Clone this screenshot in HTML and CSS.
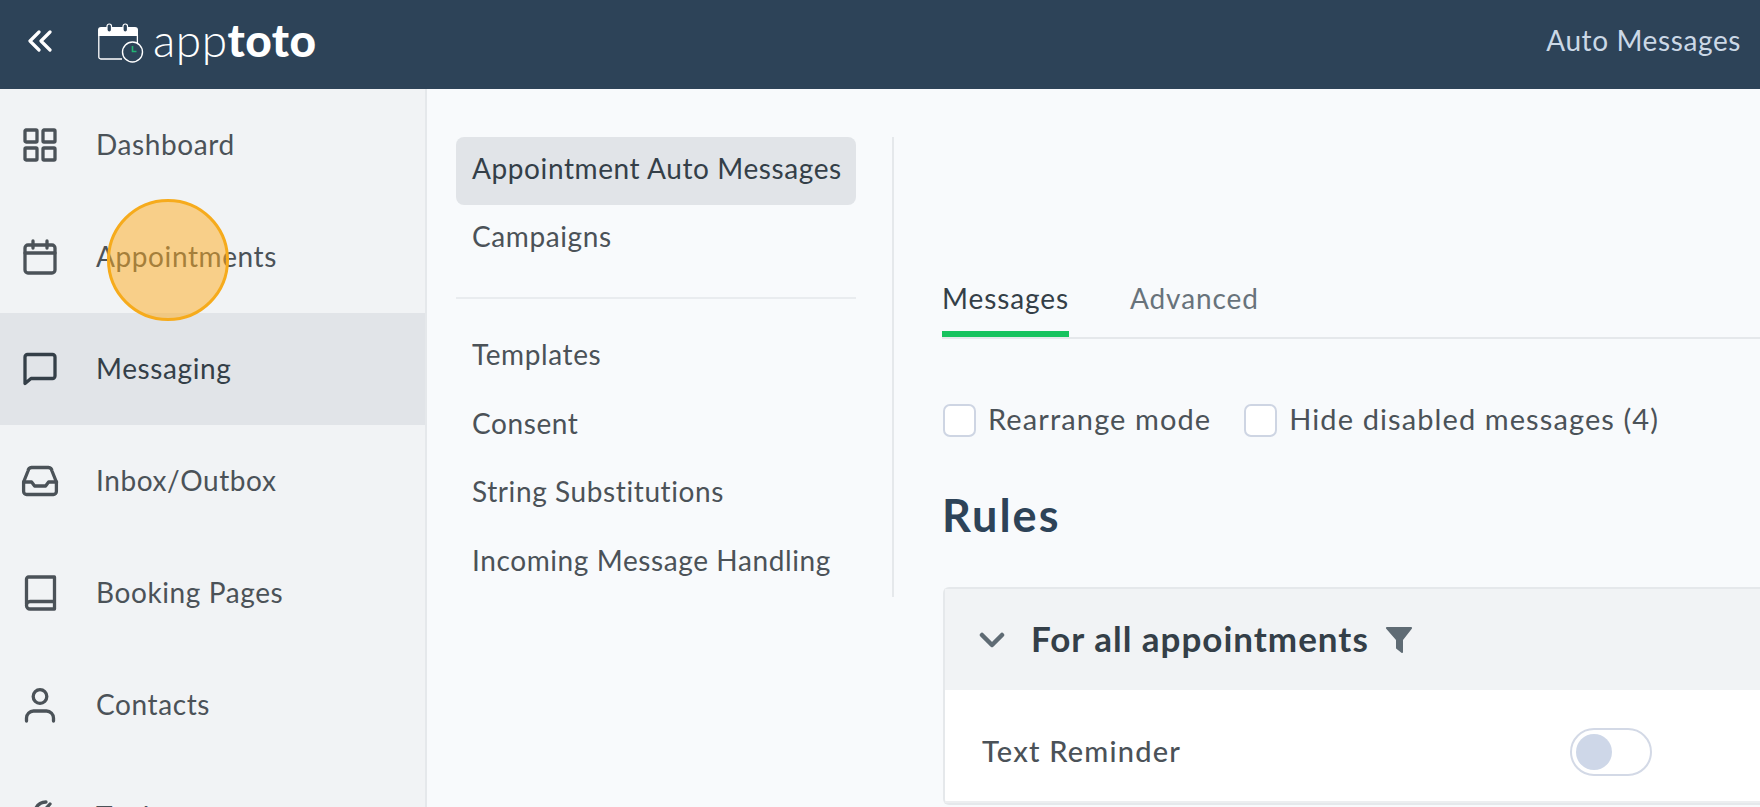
FILE: index.html
```html
<!DOCTYPE html>
<html lang="en">
<head>
    <meta charset="UTF-8">
    <meta name="viewport" content="width=device-width, initial-scale=1.0">
    <title>Apptoto - Auto Messages</title>
    <link rel="stylesheet" href="styles.css">
</head>
<body>
    <header class="topbar">
        <svg class="collapse" viewBox="0 0 24 22" fill="none" stroke="currentColor" stroke-width="3.2" stroke-linecap="round" stroke-linejoin="round">
            <path d="M11 2 2 11l9 9"/>
            <path d="M22 2l-9 9 9 9"/>
        </svg>
        <div class="logo">
            <svg class="logo-icon" viewBox="0 0 46 40">
                <path d="M3 4h34a3 3 0 0 1 3 3v6H0V7a3 3 0 0 1 3-3z" fill="#fff"/>
                <rect x="9" y="1" width="4.500" height="8" rx="2.200" fill="#2d4358" stroke="#fff" stroke-width="1.200"/>
                <rect x="25" y="1" width="4.500" height="8" rx="2.200" fill="#2d4358" stroke="#fff" stroke-width="1.200"/>
                <path d="M.8 12v22a2 2 0 0 0 2 2h21.200M39.400 12v8" fill="none" stroke="#fff" stroke-width="1.300"/>
                <circle cx="34.500" cy="29" r="10" fill="#2d4358" stroke="#fff" stroke-width="1.400"/>
                <path d="M34.500 23v5.500h4" fill="none" stroke="#22b573" stroke-width="1.600"/>
            </svg>
            <span class="logo-text">app<b>toto</b></span>
        </div>
        <span class="page-name">Auto Messages</span>
    </header>

    <div class="layout">
        <nav class="sidebar">
            <a class="side-item">
                <svg class="side-icon" viewBox="0 0 34 34"><rect x="2" y="2" width="12" height="12" rx="1"/><rect x="20" y="2" width="12" height="12" rx="1"/><rect x="2" y="20" width="12" height="12" rx="1"/><rect x="20" y="20" width="12" height="12" rx="1"/></svg>
                <span class="side-label">Dashboard</span>
            </a>
            <a class="side-item">
                <svg class="side-icon" viewBox="0 0 34 34"><rect x="2" y="5" width="30" height="28" rx="3"/><path d="M2 13h30M10 1v7M24 1v7"/></svg>
                <span class="side-label">Appointments</span>
            </a>
            <a class="side-item active">
                <svg class="side-icon" viewBox="0 0 34 34"><path d="M2 31.500V5a2.500 2.500 0 0 1 2.500-2.500h25A2.500 2.500 0 0 1 32 5v19a2.500 2.500 0 0 1-2.500 2.500H8z"/></svg>
                <span class="side-label">Messaging</span>
            </a>
            <a class="side-item">
                <svg class="side-icon" viewBox="0 0 34 34"><path d="M.6 18 5 7a4 4 0 0 1 3.600-3.500h16.800A4 4 0 0 1 29 7l4.400 11v9.500a3 3 0 0 1-3 3H3.600a3 3 0 0 1-3-3z"/><path d="M.6 18h8l3 4h11l3-4h8"/></svg>
                <span class="side-label">Inbox/Outbox</span>
            </a>
            <a class="side-item">
                <svg class="side-icon" viewBox="0 0 34 34"><path d="M3.500 28V3a2 2 0 0 1 2-2h26v32H7a3.500 3.500 0 0 1-3.500-3.500V29A3.500 3.500 0 0 1 7 25.500h24.500"/></svg>
                <span class="side-label">Booking Pages</span>
            </a>
            <a class="side-item">
                <svg class="side-icon" viewBox="0 0 34 34"><circle cx="17" cy="8.500" r="6.800"/><path d="M3.500 33v-3a7 7 0 0 1 7-7h13a7 7 0 0 1 7 7v3"/></svg>
                <span class="side-label">Contacts</span>
            </a>
            <a class="side-item">
                <svg class="side-icon" viewBox="0 0 34 34"><path d="M12 10c2-5 6-8 11-8M27 4l-9 10M3 32l9-12"/></svg>
                <span class="side-label">Tools</span>
            </a>
        </nav>

        <aside class="submenu">
            <div class="sub-group sub-group-top">
                <a class="sub-item active">Appointment Auto Messages</a>
                <a class="sub-item">Campaigns</a>
            </div>
            <div class="sub-group">
                <a class="sub-item">Templates</a>
                <a class="sub-item">Consent</a>
                <a class="sub-item">String Substitutions</a>
                <a class="sub-item">Incoming Message Handling</a>
            </div>
        </aside>

        <main class="content">
            <div class="tabs">
                <a class="tab active">Messages</a>
                <a class="tab">Advanced</a>
            </div>
            <div class="options">
                <label class="check"><span class="box"></span>Rearrange mode</label>
                <label class="check"><span class="box"></span>Hide disabled messages (4)</label>
            </div>
            <h1 class="title">Rules</h1>
            <section class="card">
                <div class="card-head">
                    <svg class="chevron" viewBox="0 0 26 16" fill="none" stroke="currentColor" stroke-width="4.500" stroke-linecap="round" stroke-linejoin="round"><path d="M3 3l10 10L23 3"/></svg>
                    <h2>For all appointments</h2>
                    <svg class="funnel" viewBox="0 0 28 28"><path d="M2 1h24a1 1 0 0 1 .8 1.700L18 14v12a1 1 0 0 1-1.600.8l-5-4a1 1 0 0 1-.4-.8v-8L1.200 2.700A1 1 0 0 1 2 1z"/></svg>
                </div>
                <div class="card-row">
                    <span class="row-name">Text Reminder</span>
                    <span class="toggle"><span class="knob"></span></span>
                </div>
            </section>
        </main>
    </div>

    <div class="click-marker"></div>
</body>
</html>
```

FILE: styles.css
```css
* {
    box-sizing: border-box;
}

html, body {
    height: 100%;
}

body {
    margin: 0;
    font-family: 'Lato', 'Noto Sans', sans-serif;
    font-size: 28px;
    letter-spacing: 0.6px;
    color: #4b5258;
    background-color: #f8fafc;
    overflow: hidden;
}

.topbar {
    display: flex;
    align-items: center;
    height: 89px;
    padding: 0 19px 7px 28px;
    background-color: #2d4358;
    color: #fff;
}

.collapse {
    flex: none;
    width: 24px;
    height: 22px;
    margin-right: 46px;
}

.logo {
    display: flex;
    align-items: center;
    gap: 9px;
}

.logo-icon {
    width: 46px;
    height: 40px;
    margin-top: 3px;
}

.logo-text {
    font-size: 46px;
    font-weight: 300;
    line-height: 1;
    letter-spacing: 0.5px;
    margin-top: -2px;
}

.logo-text b {
    font-weight: 900;
}

.page-name {
    margin-left: auto;
    color: #cbd8e6;
    padding-bottom: 2px;
}

.layout {
    display: flex;
    height: 718px;
}

.sidebar {
    flex: none;
    width: 427px;
    overflow: hidden;
    background-color: #f1f3f5;
    border-right: 2px solid #e5e8eb;
}

.side-item {
    display: flex;
    align-items: center;
    gap: 39px;
    height: 112px;
    padding-left: 23px;
}

.side-item.active {
    background-color: #e1e4e8;
    color: #343f48;
}

.side-label {
    margin-bottom: 3px;
}

.side-icon {
    flex: none;
    width: 34px;
    height: 34px;
    overflow: visible;
    fill: none;
    stroke: currentColor;
    stroke-width: 3.3;
    stroke-linecap: round;
    stroke-linejoin: round;
}

.submenu {
    flex: none;
    width: 467px;
    height: 460px;
    margin-top: 48px;
    padding: 0 36px 0 29px;
    border-right: 2px solid #e5e8eb;
}

.sub-group-top {
    padding-bottom: 24px;
    border-bottom: 2px solid #e9ecef;
    margin-bottom: 24px;
}

.sub-item {
    display: flex;
    align-items: center;
    height: 68px;
    padding: 0 0 6px 16px;
    border-radius: 8px;
}

.sub-group:last-child .sub-item {
    height: 68.5px;
}

.sub-item.active {
    background-color: #e1e4e8;
    color: #343f48;
}

.content {
    flex: 1;
    min-width: 0;
    padding-left: 48px;
}

.tabs {
    display: flex;
    gap: 61px;
    height: 250px;
    padding-top: 184px;
    border-bottom: 2px solid #e5e8eb;
    color: #68737b;
    letter-spacing: 0.9px;
}

.tab {
    height: 64px;
    line-height: 50px;
}

.tab.active {
    color: #343f48;
    border-bottom: 6px solid #17c35f;
}

.options {
    display: flex;
    gap: 33px;
    margin: 65px 0 0 1px;
    font-size: 29px;
    letter-spacing: 1.1px;
}

.check {
    display: flex;
    align-items: flex-start;
    gap: 12px;
    height: 33px;
    line-height: 29px;
}

.box {
    flex: none;
    width: 33px;
    height: 33px;
    background-color: #fff;
    border: 2px solid #ced5e3;
    border-radius: 7px;
}

.title {
    margin: 50px 0 44px;
    font-size: 45px;
    line-height: 56px;
    font-weight: 700;
    letter-spacing: 2px;
    color: #2d4358;
}

.card {
    margin-left: 1px;
    background-color: #fff;
    border: 2px solid #e5e8eb;
    border-right: none;
    border-radius: 6px 0 0 6px;
}

.card-head {
    display: flex;
    align-items: center;
    height: 101px;
    padding-left: 34px;
    background-color: #f1f3f5;
    color: #5f6b74;
}

.chevron {
    flex: none;
    width: 26px;
    height: 16px;
    margin-right: 26px;
}

.card-head h2 {
    margin: 0;
    padding-bottom: 4px;
    font-size: 35px;
    font-weight: 700;
    letter-spacing: 1px;
    color: #343f48;
}

.funnel {
    flex: none;
    width: 28px;
    height: 28px;
    margin-left: 16px;
    fill: currentColor;
}

.card-row {
    display: flex;
    align-items: center;
    height: 113px;
    padding: 12px 0 0 37px;
    border-bottom: 2px solid #eceef0;
}

.row-name {
    flex: none;
    width: 588px;
    margin-bottom: 3px;
    font-size: 29px;
    font-weight: 500;
    letter-spacing: 1.2px;
}

.toggle {
    display: flex;
    align-items: center;
    width: 82px;
    height: 48px;
    padding-left: 4px;
    background-color: #fff;
    border: 2px solid #d3d9e6;
    border-radius: 24px;
}

.knob {
    width: 36px;
    height: 36px;
    background-color: #ced7e8;
    border-radius: 50%;
}

/* recording highlight over the nav */
.click-marker {
    position: absolute;
    left: 107px;
    top: 199px;
    width: 122px;
    height: 122px;
    background-color: rgba(255, 172, 30, 0.5);
    border: 3px solid #f6ab1c;
    border-radius: 50%;
}
```
